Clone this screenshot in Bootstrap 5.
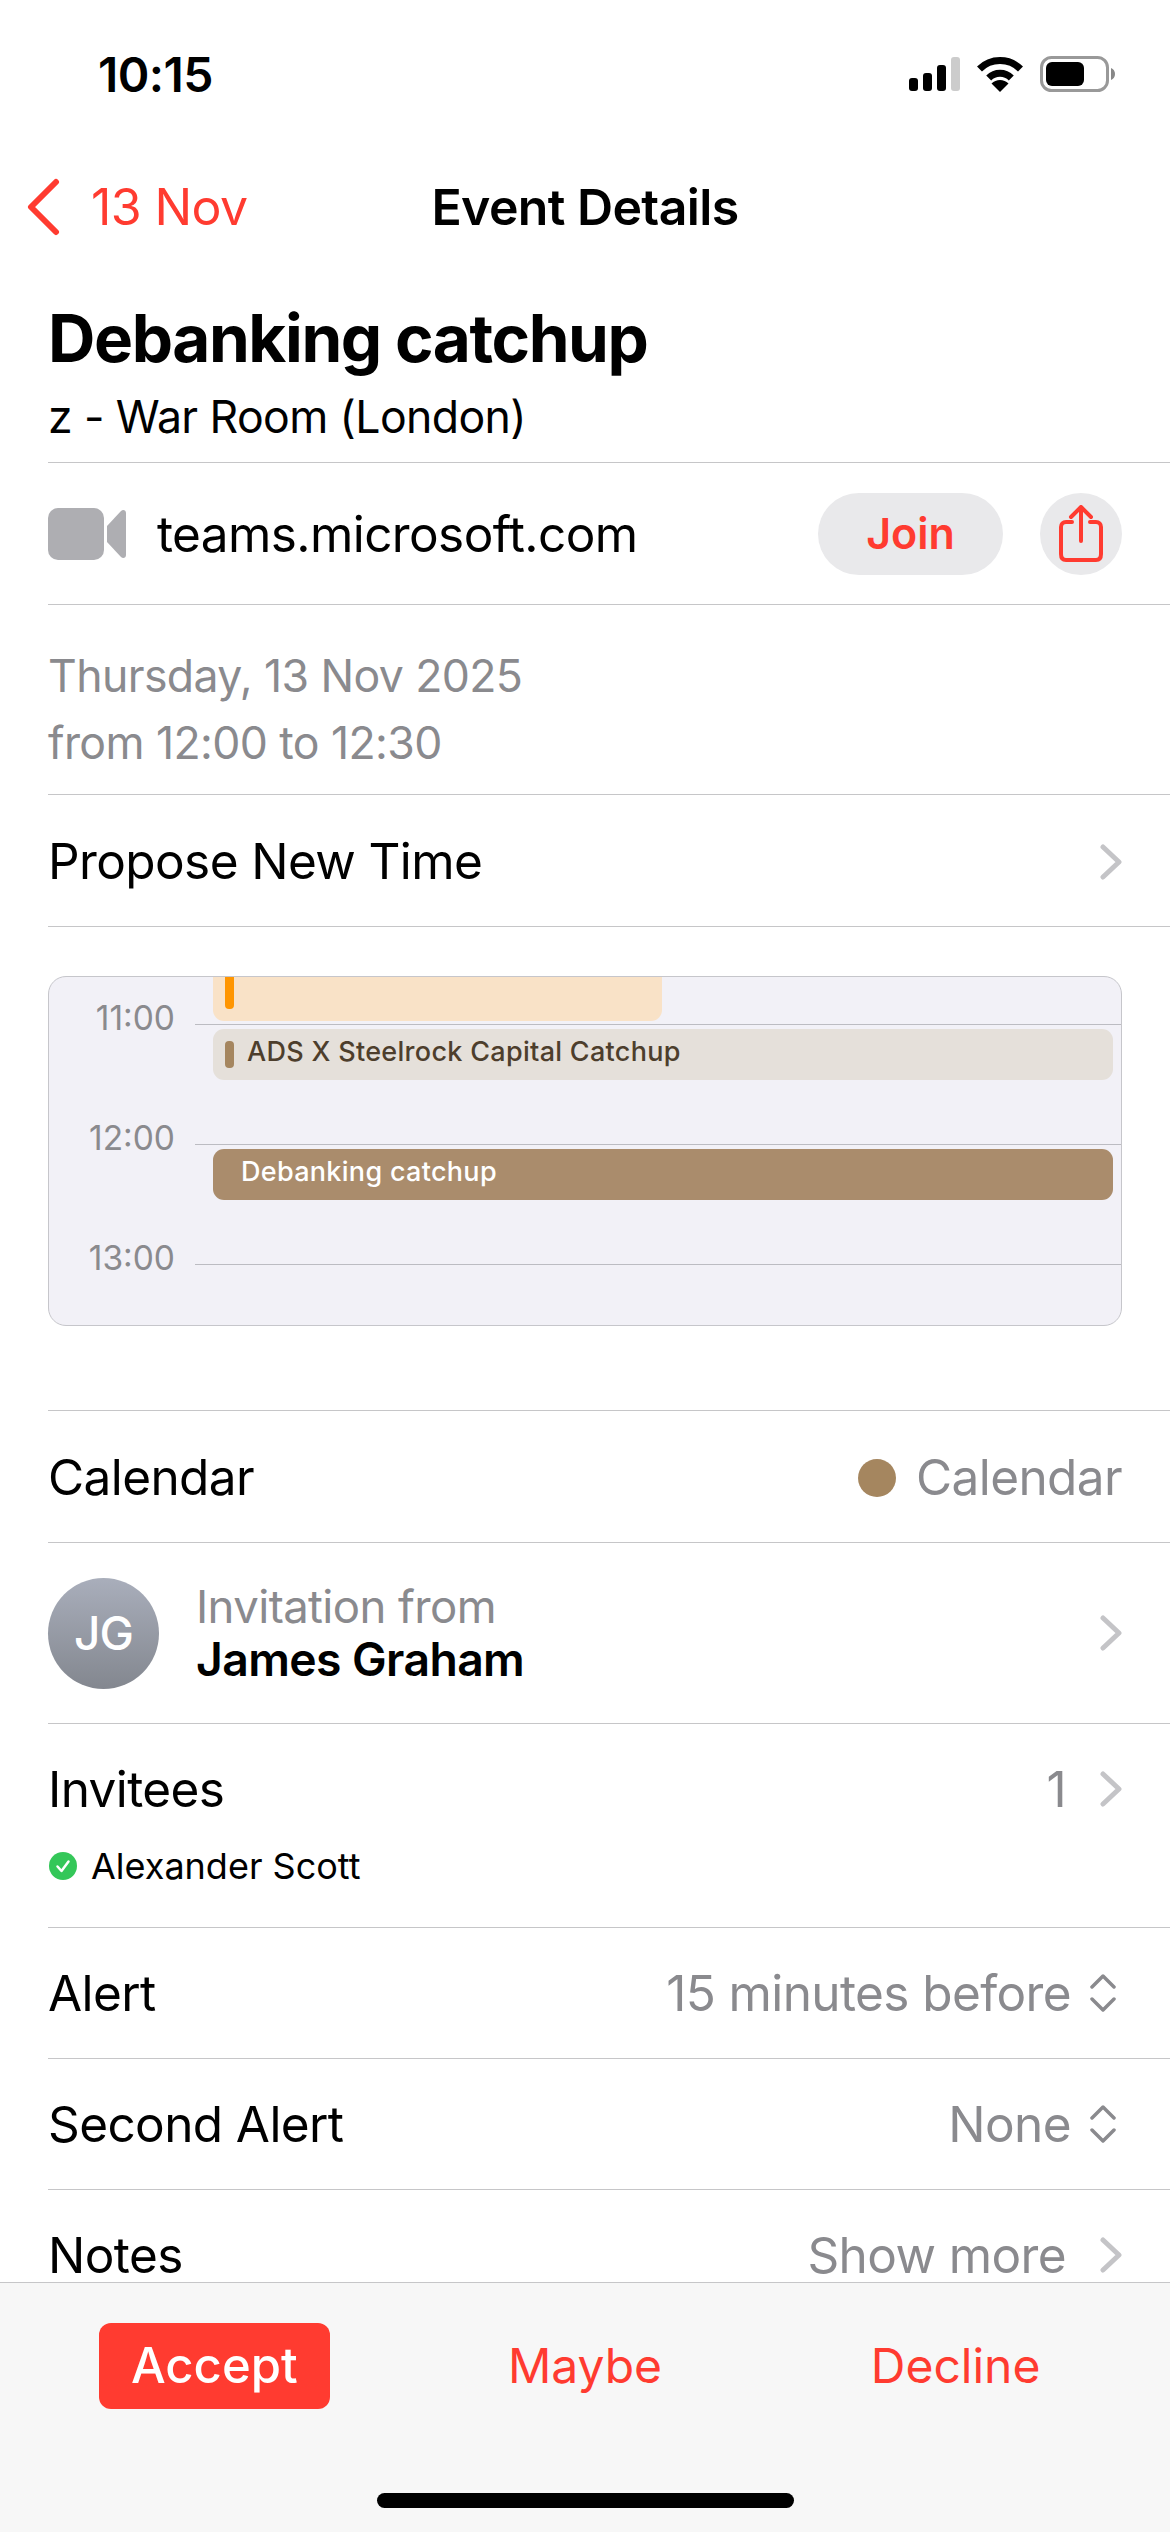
<!DOCTYPE html>
<html lang="en">
<head>
  <meta charset="UTF-8" />
  <meta name="viewport" content="width=device-width, initial-scale=1.0"/>
  <title>Event Details</title>

  <link href="https://cdn.jsdelivr.net/npm/bootstrap@5.3.3/dist/css/bootstrap.min.css" rel="stylesheet"/>

  <style>
    body {
      background: #fff;
      color: #000;
      font-family: Inter, "Liberation Sans", sans-serif;
      font-size: 49.5px;
      letter-spacing: -0.6px;
      height: 2532px;
      overflow: hidden;
    }

    .status-bar { height: 150px; padding: 0 55px 0 98px; }
    .status-time { font-size: 48px; font-weight: 600; }
    .status-icons { gap: 16px; margin-top: -2px; }

    .nav-top { height: 114px; display: grid; grid-template-columns: 1fr auto 1fr; align-items: center; }
    .nav-back { color: #ff3b30; gap: 31px; margin-left: 26px; font-size: 50px; }
    .nav-title { font-size: 50px; font-weight: 600; }

    .event-head { height: 198px; padding: 38px 0 0 48px; }
    .event-title { font-size: 65.6px; font-weight: 700; line-height: 72px; margin: 0; letter-spacing: -1.4px; }
    .event-place { font-size: 44.6px; line-height: 50px; margin-top: 18px; }

    .line-row { margin-left: 48px; padding-right: 48px; border-top: 1px solid #c6c6c8; }
    .h-video { height: 142px; }
    .h-date { height: 190px; }
    .h-std { height: 131px; }
    .h-tall { height: 132px; padding-top: 2px; }
    .h-invite { height: 181px; }
    .h-invitees { height: 204px; }
    .h-calbox { height: 484px; padding-top: 49px; }

    .muted-txt { color: #8a8a8e; }
    .video-txt { margin-left: 31px; padding-top: 2px; }
    .join-btn, .share-btn { height: 82px; background: #e9e9eb; border: 0; color: #ff3b30; font-weight: 600; padding: 0; }
    .join-btn { width: 185px; border-radius: 41px; font-size: 43px; margin-right: 37px; }
    .share-btn { width: 82px; border-radius: 50%; }

    .date-txt { font-size: 44.6px; line-height: 67px; padding-top: 38px; }

    .cal-box { position: relative; height: 350px; background: #f2f1f7; border: 1px solid #c6c6cb; border-radius: 18px; overflow: hidden; }
    .hour-row { height: 120px; margin-left: 146px; border-bottom: 1px solid #bcbcc2; position: relative; }
    .hour-lbl { position: absolute; right: 946px; bottom: -14px; font-size: 33.5px; letter-spacing: 0; color: #8a8a8e; line-height: 40px; }
    .hour-first { height: 48px; }
    .cal-ev { position: absolute; border-radius: 11px; font-size: 27px; font-weight: 500; letter-spacing: .3px; line-height: 30px; }
    .ev-orange { left: 164px; top: -10px; width: 449px; height: 54px; background: #f9e2c7; }
    .ev-orange i { position: absolute; left: 12px; top: 0; width: 9px; height: 42px; border-radius: 4px; background: #ff9500; }
    .ev-ads { left: 164px; right: 8px; top: 52px; height: 51px; background: #e5e0da; color: #4d3e2c; padding: 8px 0 0 34px; }
    .ev-ads i { position: absolute; left: 12px; top: 12px; width: 9px; height: 27px; border-radius: 4px; background: #a5865f; }
    .ev-deb { left: 164px; right: 8px; top: 172px; height: 51px; background: #aa8c6c; color: #fff; padding: 8px 0 0 28px; }

    .cal-dot { width: 38px; height: 38px; border-radius: 50%; background: #a5865f; margin-right: 20px; }
    .avatar-jg { width: 111px; height: 111px; border-radius: 50%; background: linear-gradient(#a9aebb, #83878f); color: #fff; font-size: 46px; letter-spacing: -1px; font-weight: 500; margin-right: 37px; }
    .invite-from { line-height: 52px; font-size: 45.5px; }
    .invite-name { font-weight: 600; font-size: 46.3px; line-height: 52px; }
    .inv-top { padding-top: 37px; line-height: 56px; }
    .inv-name { font-size: 36px; line-height: 46px; margin-top: 26px; letter-spacing: 0; }
    .inv-name svg { margin-right: 5px; }
    .chev { margin-left: 34px; }
    .updown { margin: 0 6px 0 19px; }

    .action-bar { height: 250px; background: #f7f7f7; border-top: 1px solid #c6c6c8; padding: 0 29px; }
    .action-cols { height: 126px; margin-top: 40px; }
    .action-btn { font-size: 48px; color: #ff3b30; background: none; border: 0; padding: 0 22px; height: 86px; border-radius: 12px; line-height: 84px; }
    .action-on { background: #ff3b30; color: #fff; font-weight: 500; font-size: 49px; padding: 0 32px; }
    .home-bar { width: 417px; height: 15px; border-radius: 8px; background: #000; position: absolute; left: 377px; bottom: 24px; }
  </style>
</head>
<body>

  <!-- Status bar -->
  <div class="status-bar d-flex align-items-center justify-content-between">
    <div class="status-time">10:15</div>
    <div class="status-icons d-flex align-items-center">
      <svg width="51" height="34" viewBox="0 0 51 34">
        <rect x="0" y="21" width="9" height="13" rx="3" fill="#000"/>
        <rect x="14" y="16" width="9" height="18" rx="3" fill="#000"/>
        <rect x="28" y="8" width="9" height="26" rx="3" fill="#000"/>
        <rect x="42" y="0" width="9" height="34" rx="3" fill="#ccc"/>
      </svg>
      <svg width="48" height="36" viewBox="0 0 48 36">
        <path d="M3.5 13A29 29 0 0 1 44.5 13" fill="none" stroke="#000" stroke-width="7"/>
        <path d="M12.7 22A16 16 0 0 1 35.3 22" fill="none" stroke="#000" stroke-width="7"/>
        <path d="M24 36L15.5 27.5A12 12 0 0 1 32.5 27.5Z" fill="#000"/>
      </svg>
      <svg width="75" height="36" viewBox="0 0 75 36">
        <rect x="1.5" y="1.5" width="66" height="33" rx="10" fill="none" stroke="#999" stroke-width="3"/>
        <rect x="6" y="6" width="38" height="24" rx="6" fill="#000"/>
        <path d="M71 12C73.500 13 75 15 75 18S73.500 23 71 24Z" fill="#888"/>
      </svg>
    </div>
  </div>

  <!-- Nav -->
  <div class="nav-top">
    <div class="nav-back d-flex align-items-center">
      <svg width="34" height="58" viewBox="0 0 34 58"><path d="M30 4L5 29L30 54" fill="none" stroke="#ff3b30" stroke-width="6" stroke-linecap="round" stroke-linejoin="round"/></svg>
      <span>13 Nov</span>
    </div>
    <div class="nav-title">Event Details</div>
    <div></div>
  </div>

  <!-- Heading -->
  <div class="event-head">
    <h1 class="event-title">Debanking catchup</h1>
    <div class="event-place">z - War Room (London)</div>
  </div>

  <div class="line-row h-video d-flex align-items-center">
    <svg width="78" height="52" viewBox="0 0 78 52">
      <rect x="0" y="0" width="56" height="52" rx="10" fill="#aeaeb2"/>
      <path d="M59 18L73 3C75 1 78 2 78 5V47C78 50 75 51 73 49L59 34Z" fill="#aeaeb2"/>
    </svg>
    <div class="video-txt">teams.microsoft.com</div>
    <button class="join-btn ms-auto">Join</button>
    <button class="share-btn d-flex align-items-center justify-content-center">
      <svg width="44" height="58" viewBox="0 0 44 58">
        <path d="M13 17H7C4 17 2 19 2 22V49C2 53 4 55 7 55H37C40 55 42 53 42 49V22C42 19 40 17 37 17H31" fill="none" stroke="#ff3b30" stroke-width="4" stroke-linecap="round"/>
        <path d="M22 36V3M12 12L22 2L32 12" fill="none" stroke="#ff3b30" stroke-width="4" stroke-linecap="round" stroke-linejoin="round"/>
      </svg>
    </button>
  </div>

  <div class="line-row h-date muted-txt date-txt">
    Thursday, 13 Nov 2025<br>from 12:00 to 12:30
  </div>

  <div class="line-row h-tall d-flex align-items-center justify-content-between">
    <span>Propose New Time</span>
    <svg width="22" height="36" viewBox="0 0 22 36"><path d="M3 3L19 18L3 33" fill="none" stroke="#c4c4c7" stroke-width="5" stroke-linecap="round" stroke-linejoin="round"/></svg>
  </div>

  <!-- Day preview -->
  <div class="line-row h-calbox">
    <div class="cal-box">
      <div class="hour-row hour-first"><span class="hour-lbl">11:00</span></div>
      <div class="hour-row"><span class="hour-lbl">12:00</span></div>
      <div class="hour-row"><span class="hour-lbl">13:00</span></div>
      <div class="cal-ev ev-orange"><i></i></div>
      <div class="cal-ev ev-ads"><i></i>ADS X Steelrock Capital Catchup</div>
      <div class="cal-ev ev-deb">Debanking catchup</div>
    </div>
  </div>

  <div class="line-row h-tall d-flex align-items-center justify-content-between">
    <span>Calendar</span>
    <span class="d-flex align-items-center muted-txt"><span class="cal-dot"></span>Calendar</span>
  </div>

  <div class="line-row h-invite d-flex align-items-center">
    <div class="avatar-jg d-flex align-items-center justify-content-center">JG</div>
    <div>
      <div class="muted-txt invite-from">Invitation from</div>
      <div class="invite-name">James Graham</div>
    </div>
    <svg class="ms-auto" width="22" height="36" viewBox="0 0 22 36"><path d="M3 3L19 18L3 33" fill="none" stroke="#c4c4c7" stroke-width="5" stroke-linecap="round" stroke-linejoin="round"/></svg>
  </div>

  <div class="line-row h-invitees">
    <div class="inv-top d-flex align-items-center">
      <span>Invitees</span>
      <span class="muted-txt ms-auto">1</span>
      <svg class="chev" width="22" height="36" viewBox="0 0 22 36"><path d="M3 3L19 18L3 33" fill="none" stroke="#c4c4c7" stroke-width="5" stroke-linecap="round" stroke-linejoin="round"/></svg>
    </div>
    <div class="inv-name d-flex align-items-center gap-2">
      <svg width="30" height="30" viewBox="0 0 30 30"><circle cx="15" cy="15" r="14" fill="#34c759"/><path d="M9.500 15.500L13.500 20L20.500 10.500" fill="none" stroke="#fff" stroke-width="2.500" stroke-linecap="round" stroke-linejoin="round"/></svg>
      <span>Alexander Scott</span>
    </div>
  </div>

  <div class="line-row h-std d-flex align-items-center">
    <span>Alert</span>
    <span class="muted-txt ms-auto">15 minutes before</span>
    <svg class="updown" width="26" height="38" viewBox="0 0 26 38"><path d="M2 13L13 2L24 13M2 25L13 36L24 25" fill="none" stroke="#8a8a8e" stroke-width="3.500" stroke-linecap="round" stroke-linejoin="round"/></svg>
  </div>

  <div class="line-row h-std d-flex align-items-center">
    <span>Second Alert</span>
    <span class="muted-txt ms-auto">None</span>
    <svg class="updown" width="26" height="38" viewBox="0 0 26 38"><path d="M2 13L13 2L24 13M2 25L13 36L24 25" fill="none" stroke="#8a8a8e" stroke-width="3.500" stroke-linecap="round" stroke-linejoin="round"/></svg>
  </div>

  <div class="line-row h-std d-flex align-items-center">
    <span>Notes</span>
    <span class="muted-txt ms-auto">Show more</span>
    <svg class="chev" width="22" height="36" viewBox="0 0 22 36"><path d="M3 3L19 18L3 33" fill="none" stroke="#c4c4c7" stroke-width="5" stroke-linecap="round" stroke-linejoin="round"/></svg>
  </div>

  <!-- Bottom toolbar -->
  <div class="action-bar fixed-bottom">
    <div class="row g-0 action-cols">
      <div class="col-4 text-center"><button class="action-btn action-on">Accept</button></div>
      <div class="col-4 text-center"><button class="action-btn">Maybe</button></div>
      <div class="col-4 text-center"><button class="action-btn">Decline</button></div>
    </div>
    <div class="home-bar"></div>
  </div>

  <script src="https://cdn.jsdelivr.net/npm/bootstrap@5.3.3/dist/js/bootstrap.bundle.min.js"></script>
</body>
</html>
